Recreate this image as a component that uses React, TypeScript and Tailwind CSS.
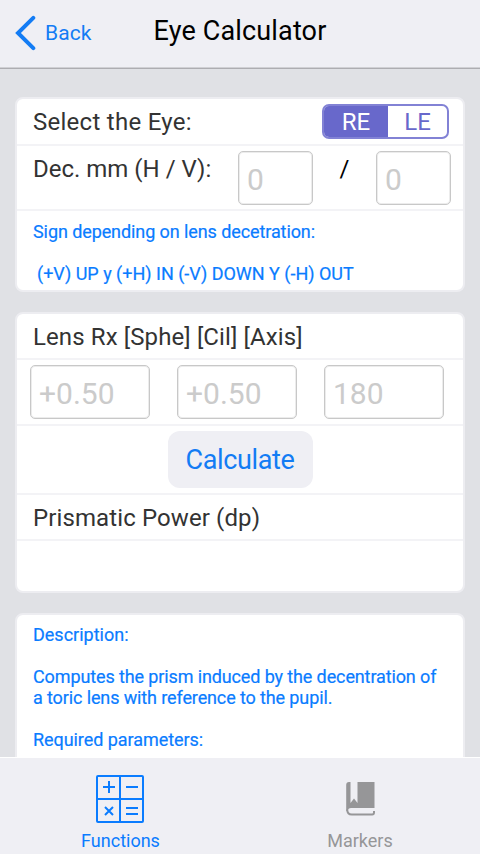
import { useState } from "react";
import type { ReactNode } from "react";

function Header() {
  return (
    <header className="relative flex h-[69px] shrink-0 items-start justify-center border-b border-[#adadb1] bg-[#efeff4] pt-[15px] shadow-[inset_0_-1px_0_#d0d0d4]">
      <button className="absolute left-[15px] top-[15px] flex items-center text-[#137cf4]">
        <svg width="22" height="36" viewBox="0 0 22 36" fill="none" stroke="currentColor" strokeWidth="4" strokeLinecap="round">
          <path d="M18.300 2.800 3 18l15.300 15.200" />
        </svg>
        <span className="ml-2 text-[21px] leading-9 tracking-[0.1px]">Back</span>
      </button>
      <h1 className="text-[27px] leading-8 tracking-[0.150px] text-black">Eye Calculator</h1>
    </header>
  );
}

function Card({ children, className = "" }: { children: ReactNode; className?: string }) {
  return (
    <section className={`rounded-lg border-2 border-[#ededf1] bg-white ${className}`}>{children}</section>
  );
}

function Field({ placeholder, className }: { placeholder: string; className: string }) {
  return (
    <input
      placeholder={placeholder}
      className={`h-[54px] rounded-[5px] border border-[#c8c8c8] bg-white px-2 pt-[3px] text-[30px] text-[#333] shadow-[inset_0_0_0_1px_#ececec] outline-none placeholder:text-[#cbcbcb] ${className}`}
    />
  );
}

function EyeSwitch() {
  const [eye, setEye] = useState("RE");
  return (
    <div className="mr-[14px] mt-[5px] flex h-[35px] w-[127px] overflow-hidden rounded-[7px] border-2 border-[#8282d5]">
      {["RE", "LE"].map((side) => (
        <button
          key={side}
          onClick={() => setEye(side)}
          className={`text-2xl leading-[33px] first:w-[64px] last:w-[59px] ${eye === side ? "bg-[#6868cb] text-white" : "text-[#6868cb]"}`}
        >
          {side}
        </button>
      ))}
    </div>
  );
}

function TabBar() {
  return (
    <nav className="flex h-[97px] shrink-0 border-t border-white bg-[#efeff4]">
      <div className="flex w-1/2 flex-col items-center pt-[17px] text-[#0a7cff]">
        <svg width="48" height="48" viewBox="0 0 48 48" fill="none" stroke="currentColor" strokeWidth="2">
          <rect x="1" y="1" width="46" height="46" rx="1" />
          <path d="M24 1v46M1 24h46" />
          <path d="M7 12h12M13 6v12M30 12h12M9 32l8 8M17 32l-8 8M30 33h12M30 39h12" />
        </svg>
        <span className="mt-[7px] pl-px text-lg leading-[21px]">Functions</span>
      </div>
      <div className="flex w-1/2 flex-col items-center pt-[17px] text-[#969698]">
        <svg width="48" height="48" viewBox="0 0 48 48" fill="currentColor">
          <path fillRule="evenodd" d="M13 7h25.500v26H15q-3 0-3 2.500l-1.800.5V10q0-3 2.800-3zM14.500 7v21l3.500-4.500 3.500 4.500V7z" />
          <path d="M11.200 34.500q0 5 4.500 5h20.500q1.800 0 1.800-2v-1.500" fill="none" stroke="currentColor" strokeWidth="2" />
        </svg>
        <span className="mt-[7px] text-lg leading-[21px]">Markers</span>
      </div>
    </nav>
  );
}

export default function App() {
  return (
    <div className="flex h-[854px] w-[480px] flex-col overflow-hidden bg-[#e0e1e5] font-['Roboto',sans-serif] text-[#333]">
      <Header />

      <main className="flex min-h-0 flex-1 flex-col gap-5 overflow-hidden px-[15px] pt-7">
        {/* Eye and decentration */}
        <Card className="h-[195px] shrink-0">
          <div className="flex h-[47px] justify-between border-b-2 border-[#f3f3f6] pl-4">
            <span className="text-2xl leading-[46px] tracking-[0.270px]">Select the Eye:</span>
            <EyeSwitch />
          </div>
          <div className="flex h-[65px] border-b-2 border-[#f3f3f6] pl-4 pt-[5px]">
            <span className="w-[205px] text-2xl leading-[37px]">Dec. mm (H / V):</span>
            <Field placeholder="0" className="w-[75px]" />
            <span className="w-[63px] text-center text-2xl leading-[37px] text-black">/</span>
            <Field placeholder="0" className="w-[75px]" />
          </div>
          <div className="pl-4 pt-[10px] text-lg leading-[21px] tracking-[-0.090px] text-[#0a7cff] [-webkit-text-stroke:0.2px]">
            <p>Sign depending on lens decetration:</p>
            <p className="mt-[21px] pl-1 tracking-[-0.010px]">(+V) UP y (+H) IN (-V) DOWN Y (-H) OUT</p>
          </div>
        </Card>

        {/* Prescription and result */}
        <Card className="h-[281px] shrink-0">
          <div className="h-[46px] border-b-2 border-[#f3f3f6] pl-4 text-2xl leading-[46px] tracking-[0.110px]">
            Lens Rx [Sphe] [Cil] [Axis]
          </div>
          <div className="flex h-[66px] gap-[27px] border-b-2 border-[#f3f3f6] pl-[13px] pt-[5px]">
            <Field placeholder="+0.50" className="w-[120px]" />
            <Field placeholder="+0.50" className="w-[120px]" />
            <Field placeholder="180" className="w-[120px]" />
          </div>
          <div className="flex h-[69px] justify-center border-b-2 border-[#f3f3f6] pt-[5px]">
            <button className="h-[57px] w-[145px] rounded-xl bg-[#efeff4] pt-0.5 text-[27px] tracking-[-0.350px] text-[#137cf4]">
              Calculate
            </button>
          </div>
          <div className="h-[46px] border-b-2 border-[#f3f3f6] pl-4 text-2xl leading-[46px] tracking-[0.110px]">
            Prismatic Power (dp)
          </div>
        </Card>

        {/* Help text */}
        <Card className="h-[300px] shrink-0">
          <div className="pl-4 pt-[9px] text-lg leading-[21px] text-[#0a7cff] [-webkit-text-stroke:0.2px]">
            <p>Description:</p>
            <p className="mt-[21px] tracking-[-0.120px]">
              Computes the prism induced by the decentration of
              <br />a toric lens with reference to the pupil.
            </p>
            <p className="mt-[21px] tracking-[-0.060px]">Required parameters:</p>
          </div>
        </Card>
      </main>

      <TabBar />
    </div>
  );
}
